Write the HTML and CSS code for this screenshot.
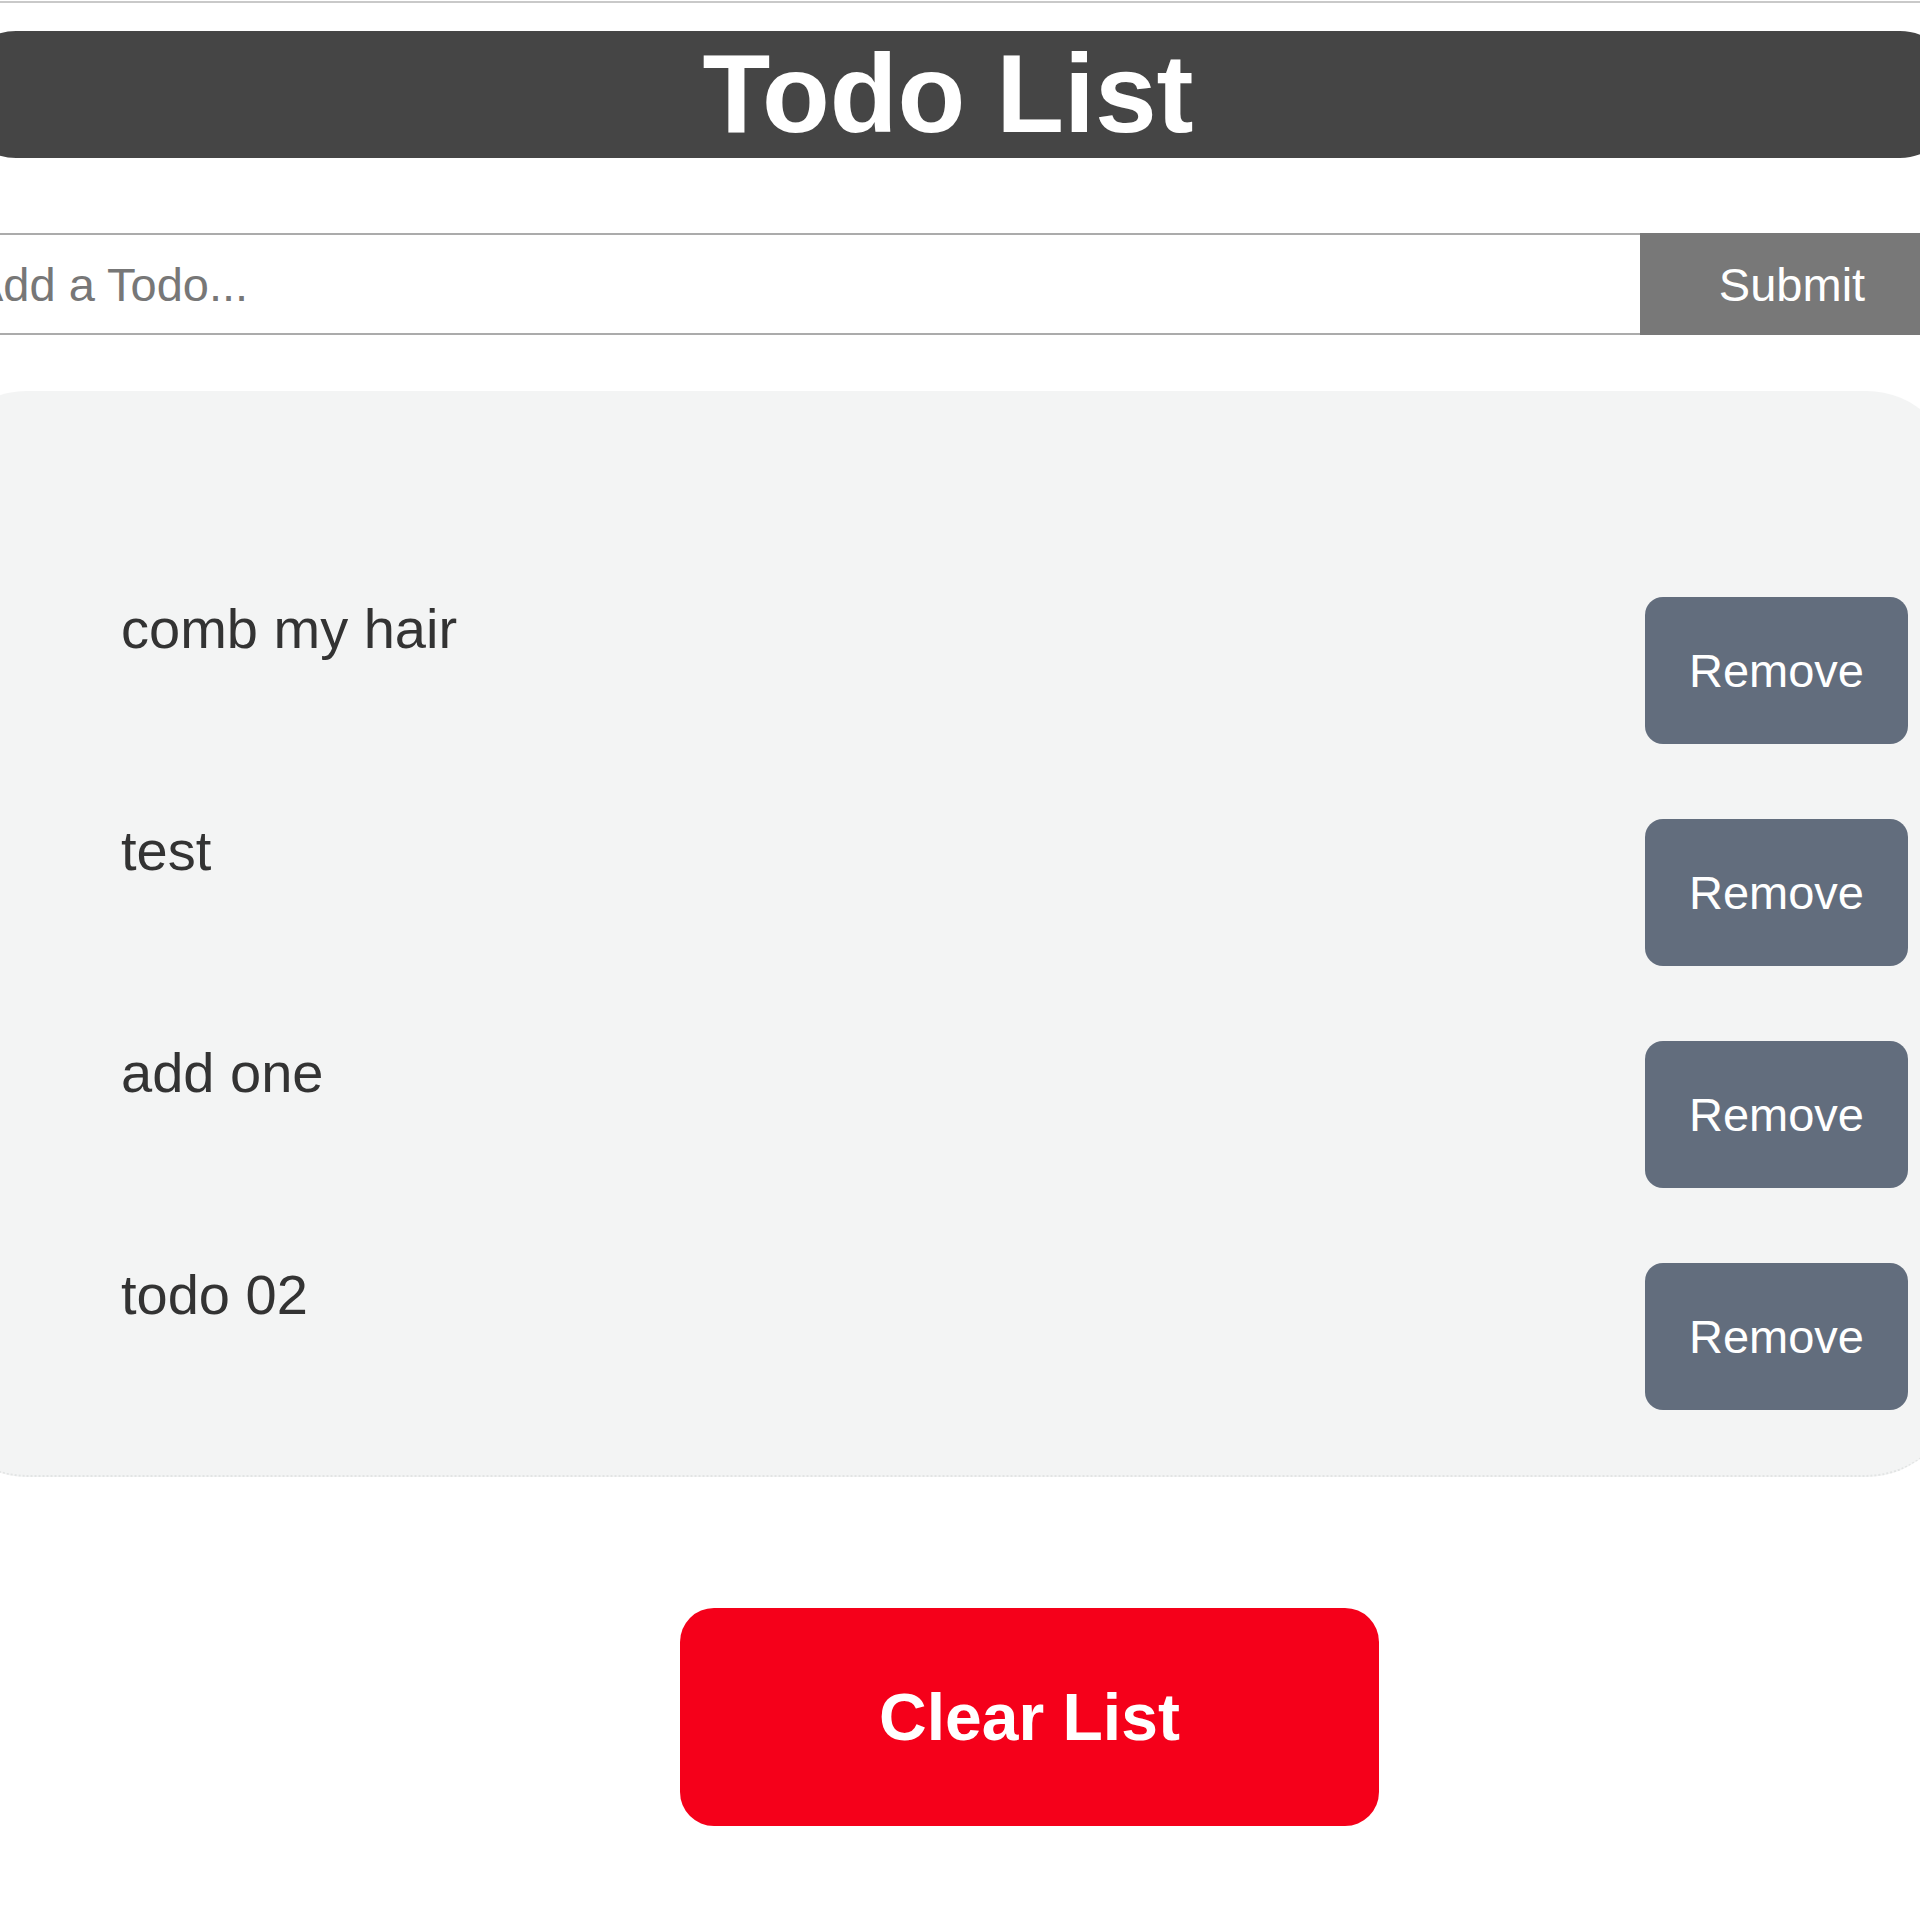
FILE: index.html
```html
<!DOCTYPE html>
<html>
<head>
<meta charset="utf-8">
<title>Todo List</title>
<link rel="stylesheet" href="styles.css">
</head>
<body>
<div class="topline"></div>
<div class="page">
  <header class="header"><h1 class="title">Todo List</h1></header>
  <form class="add-form">
    <input class="add-input" type="text" placeholder="Add a Todo...">
    <button class="submit-btn" type="button">Submit</button>
  </form>
  <ul class="todo-list">
    <li class="todo-item"><span class="todo-text">comb my hair</span><button class="remove-btn" type="button">Remove</button></li>
    <li class="todo-item"><span class="todo-text">test</span><button class="remove-btn" type="button">Remove</button></li>
    <li class="todo-item"><span class="todo-text">add one</span><button class="remove-btn" type="button">Remove</button></li>
    <li class="todo-item"><span class="todo-text">todo 02</span><button class="remove-btn" type="button">Remove</button></li>
  </ul>
  <div class="clear-row"><button class="clear-btn" type="button">Clear List</button></div>
</div>
</body>
</html>
```
FILE: styles.css
```css
html, body {
  margin: 0;
  padding: 0;
  background: #ffffff;
  overflow: hidden;
  font-family: "Liberation Sans", Arial, sans-serif;
}

.topline {
  margin-top: 1px;
  height: 2px;
  background: #c9c9c9;
}

.page {
  width: 2020px;
  margin-left: -64px;
  display: flex;
  flex-direction: column;
}

.header {
  margin: 28px 0 0 24px;
  height: 127px;
  background: #454545;
  border-radius: 56px;
  display: flex;
  justify-content: center;
  padding-right: 20px;
}

.title {
  margin: 0;
  color: #ffffff;
  font-size: 111px;
  font-weight: bold;
  line-height: 127px;
}

.add-form {
  margin: 75px 12px 0 0;
  display: flex;
  height: 102px;
}

.add-input {
  flex: 1;
  min-width: 0;
  box-sizing: border-box;
  height: 102px;
  border: 2px solid #ababab;
  border-right: none;
  padding: 0 0 0 34px;
  font-family: "Liberation Sans", Arial, sans-serif;
  font-size: 47px;
  color: #333;
  background: #fff;
  outline: none;
}

.add-input::placeholder {
  color: #777777;
}

.submit-btn {
  width: 304px;
  height: 102px;
  border: none;
  background: #787878;
  color: #ffffff;
  font-family: "Liberation Sans", Arial, sans-serif;
  font-size: 47px;
}

.todo-list {
  list-style: none;
  margin: 56px 0 0 1px;
  padding: 206px 48px 65px 184px;
  background: #f3f4f4;
  border-radius: 90px;
  border-bottom: 2px dotted #e2e4e4;
  display: flex;
  flex-direction: column;
  gap: 75px;
}

.todo-item {
  display: flex;
  justify-content: space-between;
  align-items: flex-start;
}

.todo-text {
  font-size: 56px;
  color: #333333;
  line-height: 64px;
}

.remove-btn {
  width: 263px;
  height: 147px;
  border: none;
  border-radius: 18px;
  background: #626d7d;
  color: #ffffff;
  font-family: "Liberation Sans", Arial, sans-serif;
  font-size: 47px;
}

.clear-row {
  display: flex;
  padding: 131px 0 0 744px;
}

.clear-btn {
  width: 699px;
  height: 218px;
  border: none;
  border-radius: 34px;
  background: #f5001a;
  color: #ffffff;
  font-family: "Liberation Sans", Arial, sans-serif;
  font-size: 66px;
  font-weight: bold;
}
```
